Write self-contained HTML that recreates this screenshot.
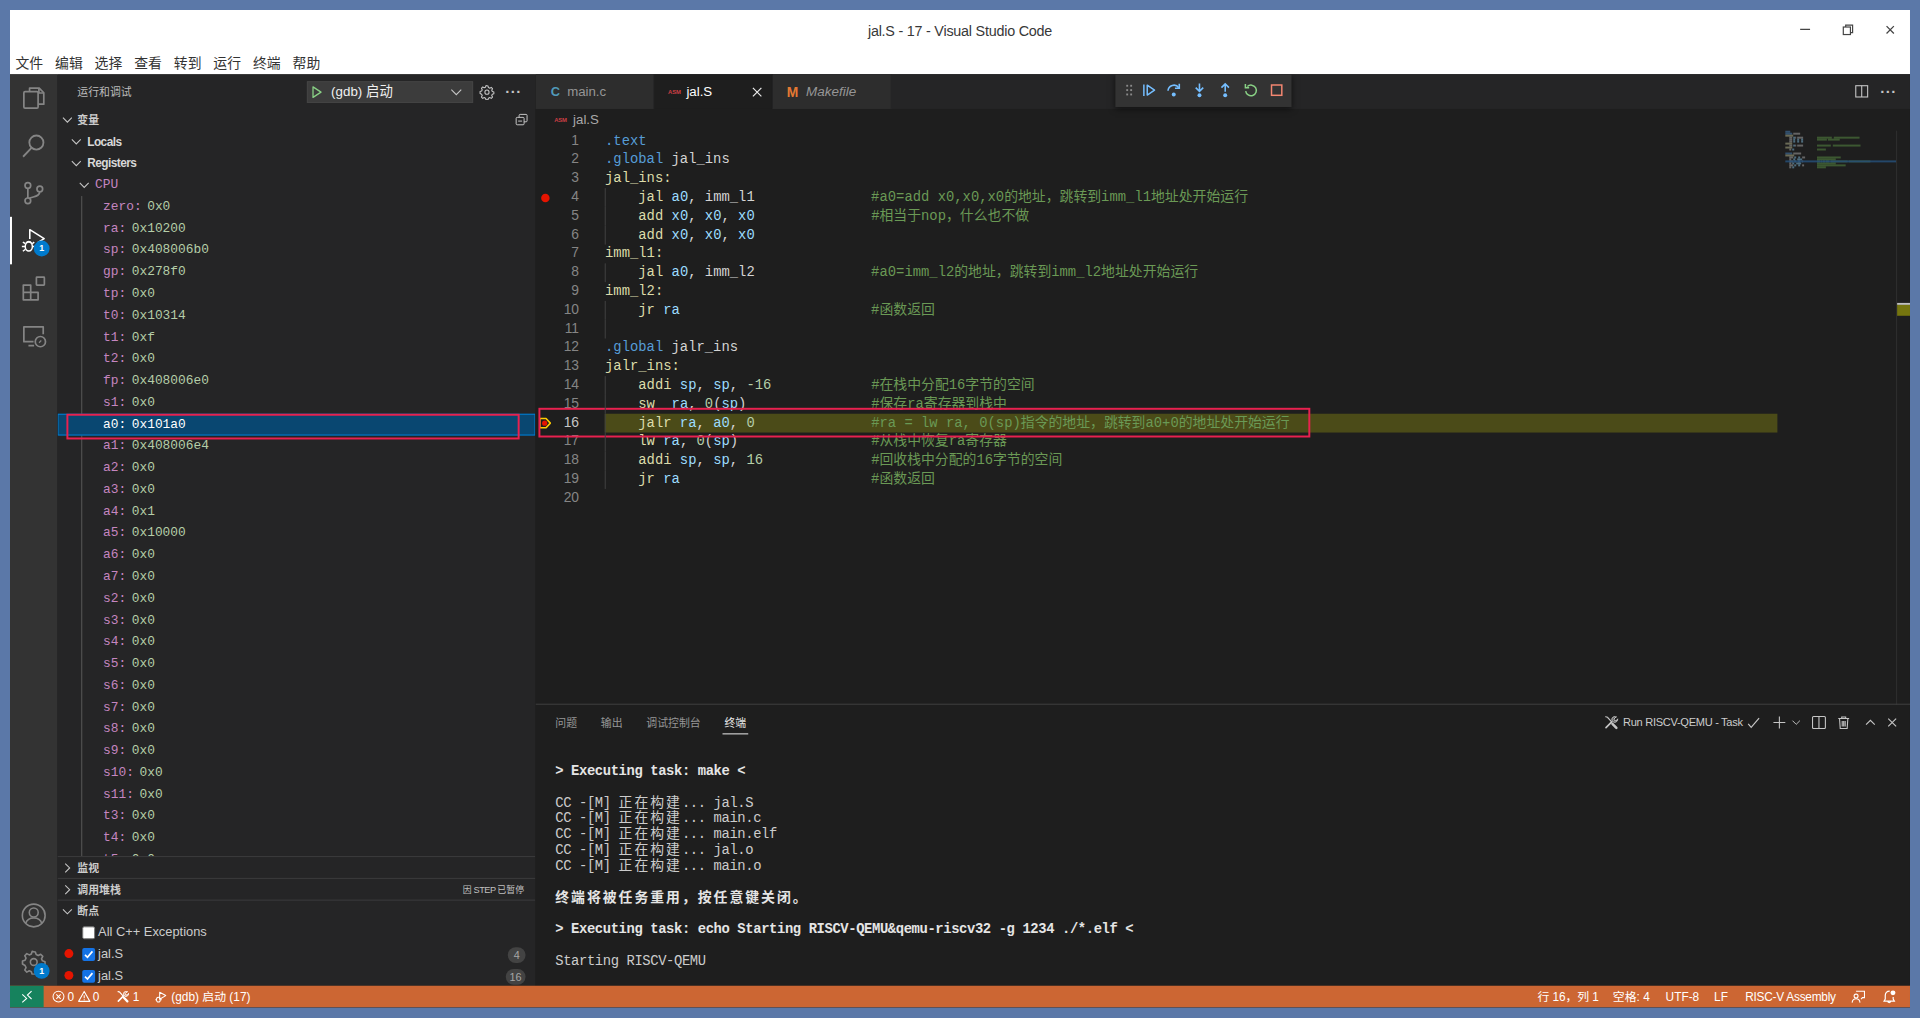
<!DOCTYPE html>
<html lang="zh-CN">
<head>
<meta charset="utf-8">
<title>jal.S - 17 - Visual Studio Code</title>
<style>
*{box-sizing:border-box;margin:0;padding:0}
html,body{width:1920px;height:1018px;overflow:hidden;background:#5b78a8}
body{position:relative;font-family:"Liberation Sans","Noto Sans CJK SC",sans-serif;font-size:13px;color:#ccc}
#win{position:absolute;left:10px;top:10px;width:1920px;height:1008.2px;transform:scale(0.989583);transform-origin:0 0;background:#1e1e1e;overflow:hidden}
.abs{position:absolute}
svg{display:block}
/* ---------- title + menu ---------- */
#title{left:0;top:0;width:1920px;height:64.7px;background:#fff;color:#333}
#title .cap{position:absolute;left:0;right:0;top:10.7px;text-align:center;font-size:14.5px;line-height:20px;color:#383838;letter-spacing:-0.23px}
#menu{position:absolute;left:5.5px;top:42.7px;height:22px;display:flex;font-size:14px;line-height:22px;color:#333}
#menu span{display:block;width:40px;text-align:left}
.wc{position:absolute;top:0;color:#444}
/* ---------- body ---------- */
#main{left:0;top:64.7px;width:1920px;height:921px}
#act{left:0;top:0;width:48px;height:921px;background:#333}
#side{left:48px;top:0;width:483px;height:921px;background:#252526;overflow:hidden}
#ed{left:531px;top:0;width:1389px;height:921px;background:#1e1e1e;overflow:hidden}
#status{left:0;top:985.9px;width:1920px;height:22.3px;background:#cc6633;color:#fff;font-size:12px;line-height:22px}

/* ---------- sidebar ---------- */
.mono{font-family:"Liberation Mono","Noto Sans CJK SC",monospace}
.shead{position:absolute;left:0;top:0;width:483px;height:35px}
.stitle{position:absolute;left:20px;top:1px;line-height:35px;font-size:11px;color:#bbb}
.dd{position:absolute;left:251.5px;top:7px;width:168px;height:22.5px;background:#3c3c3c;border:1px solid #444}
.ddt{position:absolute;left:25px;top:0;line-height:22px;font-size:13.500px;color:#f0f0f0}
.vars{left:0;top:35px;width:483px;height:755.8px;overflow:hidden}
.row{position:relative;height:22px;line-height:22px;white-space:nowrap;display:flex;align-items:center}
.chev{flex:none;margin-left:2px;margin-right:2px}
.phead{font-size:11px;font-weight:bold;color:#ccc}
.scope{font-size:12px;font-weight:bold;color:#d8d8d8;letter-spacing:-0.55px}
.cpu,.var{font-family:"Liberation Mono","Noto Sans CJK SC",monospace;font-size:13px}
.var{padding-left:46px;display:block}
.vn{color:#c586c0}.vv{color:#b5cea8}.var .vv{margin-left:5.600px}
.sel{background:#094771;outline:1px solid #007fd4;outline-offset:-1px}
.sel .vn,.sel .vv{color:#fff}
.guide{position:absolute;left:24px;top:88px;width:1px;height:700px;background:#585858}
.bott{left:0;top:790.8px;width:483px;height:132px}
.bt{border-top:1px solid #3c3c3d}
.paused{position:absolute;right:11.5px;top:-0.5px;font-size:9px;font-weight:normal;color:#c0c0c0;letter-spacing:0;word-spacing:-0.8px}
.bp{font-size:13px;color:#ccc}
.cb{position:absolute;left:25px;top:4.500px;width:13px;height:13px;background:#fff;border-radius:2px;border:1px solid #767676}
.cb.on{background:#1473e6;border:none}
.bl{position:absolute;left:41px;top:0}
.dot{position:absolute;left:7px;top:5.6px;width:9px;height:9px;border-radius:50%;background:#e51400}
.badge{position:absolute;right:10px;top:3.7px;min-width:18px;height:16px;line-height:16px;border-radius:8px;background:#434343;color:#a6a6a6;font-size:11px;text-align:center;padding:0 4px}
.redbox{border:2px solid #e8214f}

/* ---------- editor ---------- */
.tabs{position:absolute;left:0;top:0;width:1389px;height:35px;background:#252526;display:flex}
.tab{position:relative;width:120px;height:35px;background:#2d2d2d;border-right:1px solid #252526;color:#969696;font-size:13.4px;line-height:36.4px}
.tab.act{background:#1e1e1e;color:#fff}
.tab .ic{position:absolute;top:0}
.tab .tl{position:absolute;top:0}
.asm{position:absolute;font-size:6px;font-weight:bold;color:#cc3e44;letter-spacing:-0.200px;font-family:"Liberation Sans",sans-serif}
.dbgbar{position:absolute;left:585.5px;top:0;width:178.5px;height:33px;background:#333;box-shadow:0 2px 6px rgba(0,0,0,.55)}
.edact{position:absolute;right:0;top:0;width:70px;height:35px}
.crumb{position:absolute;left:1px;top:35.7px;width:1388px;height:22px;line-height:22px;font-size:13.4px;color:#a9a9a9}
.code{position:absolute;left:0;top:58.3px;width:1255px;height:400px;font-family:"Liberation Mono","Noto Sans CJK SC",monospace;font-size:14px;line-height:19px;color:#d4d4d4}
.ln{position:relative;height:19px;white-space:pre}
.no{position:absolute;left:0;top:-0.9px;width:43.7px;text-align:right;color:#858585;font-family:"Liberation Sans","Noto Sans CJK SC",sans-serif;font-size:14px;letter-spacing:-0.200px}
.cur .no{color:#c6c6c6}
.cd{position:absolute;left:70.300px;top:0;right:0;height:19px}
.cur .cd{background:#4b4b18}
.ig{position:absolute;left:70.300px;top:0;width:1px;height:19px;background:#404040;z-index:2}
.kd{color:#569cd6}.lb{color:#dcdcaa}.rg{color:#9cdcfe}.nm{color:#b5cea8}.cm{color:#6a9955}
.minimap{position:absolute;left:1263px;top:57.8px;width:112px;height:580px}
.minimap i{position:absolute;height:1.6px;opacity:.62}
.minimap .mmsel{left:0;top:30px;width:112px;height:2px;background:rgba(38,79,120,.85);opacity:1}
.vscroll{position:absolute;left:1375px;top:57px;width:14px;height:580px;border-left:1px solid #303030}
.vscroll .m1{position:absolute;left:0;top:174.500px;width:13px;height:1.500px;background:#c0c0c0}
.vscroll .m2{position:absolute;left:0;top:176px;width:13px;height:11.500px;background:#75750f}
.panel{position:absolute;left:0;top:636.500px;width:1389px;height:285.300px;border-top:1px solid #414141}

/* ---------- panel / status ---------- */
.ptabs{position:absolute;left:0;top:0;height:35px;width:400px;font-size:11px;line-height:38.6px;color:#969696}
.ptabs span{position:absolute;top:0;white-space:nowrap}
.ptabs .on{color:#e7e7e7}
.ptabs .on:after{content:"";position:absolute;left:-2px;right:-2px;top:29px;height:1px;background:#efefef}
.term{position:absolute;left:20px;top:58.500px;width:1340px;font-family:"Liberation Mono","Noto Sans CJK SC",monospace;font-size:14px;line-height:16px;color:#ccc;letter-spacing:-0.400px}
.term div{height:16px;white-space:pre}
.term b{color:#e5e5e5}
.term .cj{letter-spacing:2px}
.sl{position:absolute;top:0;height:22px;display:flex;align-items:center;white-space:nowrap}
.sr{position:absolute;top:0;height:22px;white-space:nowrap}
.scope .chev,.cpu .chev{margin-right:3px}
</style>
</head>
<body>
<div id="win">
  <div id="title" class="abs">
    <div class="cap">jal.S - 17 - Visual Studio Code</div>
    
    <svg class="wc" style="left:1806px;top:12px" width="16" height="16" viewBox="0 0 16 16"><path d="M3 7.500h10" stroke="#444" stroke-width="1.200"/></svg>
    <svg class="wc" style="left:1849px;top:12px" width="16" height="16" viewBox="0 0 16 16"><g fill="none" stroke="#444" stroke-width="1.200"><rect x="3.6" y="5.2" width="7.2" height="7.6"/><path d="M6 5.200V3.200h7v7.600h-2.200"/></g></svg>
    <svg class="wc" style="left:1892px;top:12px" width="16" height="16" viewBox="0 0 16 16"><path d="M4.300 4.300l7.400 7.400M11.700 4.300l-7.400 7.400" stroke="#444" stroke-width="1.3"/></svg>
    <div id="menu"><span>文件</span><span>编辑</span><span>选择</span><span>查看</span><span>转到</span><span>运行</span><span>终端</span><span>帮助</span></div>
  </div>
  <div id="main" class="abs">
    <div id="act" class="abs">
      <svg class="abs" style="left:10.2px;top:10.2px" width="27.6" height="27.6" viewBox="0 0 24 24"><g fill="none" stroke="#858585" stroke-width="1.500" stroke-linejoin="round"><path d="M8.500 6.500V3.500h8.500l4 4v10h-5"/><path d="M16.700 3.700v4h4"/><rect x="3.500" y="6.500" width="12.500" height="14.500" rx="1"/></g></svg>
      <svg class="abs" style="left:10.2px;top:58.2px" width="27.6" height="27.6" viewBox="0 0 24 24"><g fill="none" stroke="#858585" stroke-width="1.600"><circle cx="14.500" cy="9.500" r="6.200"/><path d="M10.200 14.200L2.800 22"/></g></svg>
      <svg class="abs" style="left:10.2px;top:106.2px" width="27.6" height="27.6" viewBox="0 0 24 24"><g fill="none" stroke="#858585" stroke-width="1.500"><circle cx="7" cy="5.500" r="2.500"/><circle cx="7" cy="19" r="2.500"/><circle cx="17.500" cy="8.500" r="2.500"/><path d="M7 8v8.500M17.500 11c0 4-5 4-9.500 6"/></g></svg>
      <div class="abs" style="left:0;top:144px;width:2px;height:48px;background:#fff"></div>
      <svg class="abs" style="left:10px;top:154px" width="30" height="30" viewBox="0 0 30 30"><g fill="none" stroke="#fff" stroke-width="1.600" stroke-linejoin="round"><path d="M10 12.500V3l14.500 9-6.500 4"/></g><g fill="none" stroke="#fff" stroke-width="1.500"><ellipse cx="9" cy="20" rx="3.600" ry="4.600"/><path d="M6.500 16.500c.8-2.200 4.200-2.200 5 0M5.400 20H2M5.600 17.200L3 15.500M5.600 22.800L3 24.800M12.600 20H15M12.400 17.200L14.500 15.500"/></g></svg>
      <div class="abs" style="left:24px;top:168.5px;width:16px;height:16px;border-radius:8px;background:#007acc;color:#fff;font-size:9px;font-weight:bold;line-height:16px;text-align:center">1</div>
      <svg class="abs" style="left:10.2px;top:202.2px" width="27.6" height="27.6" viewBox="0 0 24 24"><g fill="none" stroke="#858585" stroke-width="1.500" stroke-linejoin="round"><path d="M3 9.500h6.500v6.500H16v6.500H3zM9.500 16v6.500M3 16h6.500"/><rect x="14.500" y="2.500" width="7" height="7" rx=".5"/></g></svg>
      <svg class="abs" style="left:10.2px;top:250.2px" width="27.6" height="27.6" viewBox="0 0 24 24"><g fill="none" stroke="#858585" stroke-width="1.500" stroke-linejoin="round"><path d="M12 17.500H3.500V4.500h17V11M7.500 21h5"/><circle cx="18" cy="17.500" r="4.500"/><path d="M16.800 18.500l2-2" stroke-width="1"/></g></svg>
      <svg class="abs" style="left:10px;top:836px" width="28" height="28" viewBox="0 0 28 28"><g fill="none" stroke="#858585" stroke-width="1.600"><circle cx="14" cy="14" r="11.500"/><circle cx="14" cy="11" r="4.500"/><path d="M5.800 22c1.500-4.500 5-5.500 8.200-5.500s6.700 1 8.200 5.500"/></g></svg>
      <svg class="abs" style="left:11px;top:884px" width="26" height="26" viewBox="0 0 16 16"><g fill="none" stroke="#858585" stroke-width="1"><circle cx="8" cy="8" r="2.100"/><path d="M8 1.600l1 .2.500 1.600 1.300.6 1.500-.8 1.300 1.300-.8 1.500.6 1.300 1.600.5v1.900l-1.600.5-.6 1.300.8 1.500-1.300 1.300-1.500-.8-1.300.6-.5 1.600H7l-.5-1.600-1.300-.6-1.500.8-1.300-1.300.8-1.500-.6-1.300L1 9.300V7.400l1.600-.5.6-1.300-.8-1.500 1.300-1.300 1.500.8 1.300-.6.500-1.600z" stroke-linejoin="round"/></g></svg>
      <div class="abs" style="left:24px;top:898px;width:16px;height:16px;border-radius:8px;background:#007acc;color:#fff;font-size:9px;font-weight:bold;line-height:16px;text-align:center">1</div>
</div>
    <div id="side" class="abs">
    <div class="shead">
      <span class="stitle">运行和调试</span>
      <div class="dd"><svg width="16" height="16" viewBox="0 0 16 16" style="position:absolute;left:1.500px;top:2.500px"><path d="M4.2 2.7v10.6L12.3 8z" fill="none" stroke="#89d185" stroke-width="1.3" stroke-linejoin="round"/></svg><span class="ddt" style="top:-1px;left:24px">(gdb) 启动</span><svg width="16" height="16" viewBox="0 0 16 16" style="position:absolute;right:7.500px;top:2.500px"><path d="M3 5.5 8 10.5l5-5" fill="none" stroke="#c5c5c5" stroke-width="1.1"/></svg></div>
      <svg class="abs" style="left:426px;top:10px" width="16" height="16" viewBox="0 0 16 16"><g fill="none" stroke="#c5c5c5" stroke-width="1.1"><circle cx="8" cy="8" r="2.1"/><path d="M8 1.6l1 .2.5 1.6 1.3.6 1.5-.8 1.3 1.3-.8 1.5.6 1.3 1.6.5v1.9l-1.6.5-.6 1.3.8 1.5-1.3 1.3-1.5-.8-1.3.6-.5 1.6H7l-.5-1.6-1.3-.6-1.5.8-1.3-1.3.8-1.5-.6-1.3L1 9.3V7.4l1.600-.5.6-1.300-.8-1.500 1.300-1.300 1.500.8 1.300-.6.5-1.600z" stroke-linejoin="round"/></g></svg>
      <div class="abs" style="left:452.500px;top:7.200px;font-size:15px;color:#c5c5c5;letter-spacing:0.5px;line-height:22px;font-weight:bold">···</div>
    </div>
    <div class="abs vars">
      <div class="row phead"><svg class="chev" width="16" height="16" viewBox="0 0 16 16"><path d="M3.5 5.8 8 10.3l4.5-4.5" fill="none" stroke="#c5c5c5" stroke-width="1.1"/></svg><span>变量</span><svg class="abs" style="right:6px;top:3px" width="16" height="16" viewBox="0 0 16 16"><g fill="none" stroke="#c5c5c5" stroke-width="1"><rect x="2.5" y="5.5" width="8" height="7.5" rx="1"/><path d="M5.5 5.500V3.500a1 1 0 0 1 1-1h6a1 1 0 0 1 1 1v5.500a1 1 0 0 1-1 1h-2"/><path d="M4.500 9.250h4"/></g></svg></div>
      <div class="row scope" style="padding-left:9px"><svg class="chev" width="16" height="16" viewBox="0 0 16 16"><path d="M3.5 5.8 8 10.3l4.5-4.5" fill="none" stroke="#c5c5c5" stroke-width="1.1"/></svg><span>Locals</span></div>
      <div class="row scope" style="padding-left:9px"><svg class="chev" width="16" height="16" viewBox="0 0 16 16"><path d="M3.5 5.8 8 10.3l4.5-4.5" fill="none" stroke="#c5c5c5" stroke-width="1.1"/></svg><span>Registers</span></div>
      <div class="row cpu" style="padding-left:17px"><svg class="chev" width="16" height="16" viewBox="0 0 16 16"><path d="M3.5 5.8 8 10.3l4.5-4.5" fill="none" stroke="#c5c5c5" stroke-width="1.1"/></svg><span class="vn">CPU</span></div>
      <div class="guide"></div>
      <div class="row var"><span class="vn">zero:</span><span class="vv">0x0</span></div>
      <div class="row var"><span class="vn">ra:</span><span class="vv">0x10200</span></div>
      <div class="row var"><span class="vn">sp:</span><span class="vv">0x408006b0</span></div>
      <div class="row var"><span class="vn">gp:</span><span class="vv">0x278f0</span></div>
      <div class="row var"><span class="vn">tp:</span><span class="vv">0x0</span></div>
      <div class="row var"><span class="vn">t0:</span><span class="vv">0x10314</span></div>
      <div class="row var"><span class="vn">t1:</span><span class="vv">0xf</span></div>
      <div class="row var"><span class="vn">t2:</span><span class="vv">0x0</span></div>
      <div class="row var"><span class="vn">fp:</span><span class="vv">0x408006e0</span></div>
      <div class="row var"><span class="vn">s1:</span><span class="vv">0x0</span></div>
      <div class="row var sel"><span class="vn">a0:</span><span class="vv">0x101a0</span></div>
      <div class="row var"><span class="vn">a1:</span><span class="vv">0x408006e4</span></div>
      <div class="row var"><span class="vn">a2:</span><span class="vv">0x0</span></div>
      <div class="row var"><span class="vn">a3:</span><span class="vv">0x0</span></div>
      <div class="row var"><span class="vn">a4:</span><span class="vv">0x1</span></div>
      <div class="row var"><span class="vn">a5:</span><span class="vv">0x10000</span></div>
      <div class="row var"><span class="vn">a6:</span><span class="vv">0x0</span></div>
      <div class="row var"><span class="vn">a7:</span><span class="vv">0x0</span></div>
      <div class="row var"><span class="vn">s2:</span><span class="vv">0x0</span></div>
      <div class="row var"><span class="vn">s3:</span><span class="vv">0x0</span></div>
      <div class="row var"><span class="vn">s4:</span><span class="vv">0x0</span></div>
      <div class="row var"><span class="vn">s5:</span><span class="vv">0x0</span></div>
      <div class="row var"><span class="vn">s6:</span><span class="vv">0x0</span></div>
      <div class="row var"><span class="vn">s7:</span><span class="vv">0x0</span></div>
      <div class="row var"><span class="vn">s8:</span><span class="vv">0x0</span></div>
      <div class="row var"><span class="vn">s9:</span><span class="vv">0x0</span></div>
      <div class="row var"><span class="vn">s10:</span><span class="vv">0x0</span></div>
      <div class="row var"><span class="vn">s11:</span><span class="vv">0x0</span></div>
      <div class="row var"><span class="vn">t3:</span><span class="vv">0x0</span></div>
      <div class="row var"><span class="vn">t4:</span><span class="vv">0x0</span></div>
      <div class="row var"><span class="vn">t5:</span><span class="vv">0x0</span></div>
      <div class="row var"><span class="vn">t6:</span><span class="vv">0x0</span></div>
    </div>
    <div class="abs bott">
      <div class="row phead bt"><svg class="chev" width="16" height="16" viewBox="0 0 16 16"><path d="M5.8 3.5 10.3 8l-4.5 4.5" fill="none" stroke="#c5c5c5" stroke-width="1.1"/></svg><span>监视</span></div>
      <div class="row phead bt"><svg class="chev" width="16" height="16" viewBox="0 0 16 16"><path d="M5.8 3.5 10.3 8l-4.5 4.5" fill="none" stroke="#c5c5c5" stroke-width="1.1"/></svg><span>调用堆栈</span><span class="paused">因 <span style="letter-spacing:-0.45px;font-size:9.3px">STEP</span> 已暂停</span></div>
      <div class="row phead bt"><svg class="chev" width="16" height="16" viewBox="0 0 16 16"><path d="M3.5 5.8 8 10.3l4.5-4.5" fill="none" stroke="#c5c5c5" stroke-width="1.1"/></svg><span>断点</span></div>
      <div class="row bp"><span class="cb"></span><span class="bl">All C++ Exceptions</span></div>
      <div class="row bp"><span class="dot"></span><span class="cb on"><svg width="13" height="13" viewBox="0 0 13 13"><path d="M2.800 6.800l2.500 2.500 5-6" fill="none" stroke="#fff" stroke-width="1.700"/></svg></span><span class="bl">jal.S</span><span class="badge">4</span></div>
      <div class="row bp"><span class="dot"></span><span class="cb on"><svg width="13" height="13" viewBox="0 0 13 13"><path d="M2.800 6.800l2.500 2.500 5-6" fill="none" stroke="#fff" stroke-width="1.700"/></svg></span><span class="bl">jal.S</span><span class="badge">16</span></div>
    </div>
    <div class="abs redbox" style="left:8.5px;top:343px;width:458px;height:26px"></div>
</div>
    <div id="ed" class="abs">
    <div class="tabs">
      <div class="tab"><span class="ic" style="color:#519aba;font-weight:bold;font-size:13px;left:15.5px">C</span><span class="tl" style="left:32px">main.c</span></div>
      <div class="tab act"><span class="ic asm" style="left:14px">ASM</span><span class="tl" style="left:32.5px">jal.S</span><svg class="abs" style="left:96px;top:10px" width="16" height="16" viewBox="0 0 16 16"><path d="M3.700 3.700l8.600 8.600M12.300 3.700l-8.600 8.600" stroke="#e8e8e8" stroke-width="1.200" fill="none"/></svg></div>
      <div class="tab"><span class="ic" style="color:#e37933;font-weight:bold;font-size:14px;left:14px">M</span><span class="tl" style="left:33.5px;font-style:italic;font-size:13.6px">Makefile</span></div>
    </div>
    <div class="dbgbar">
      <svg class="abs" style="left:10px;top:9.2px" width="8" height="14" viewBox="0 0 8 14"><g fill="#8a8a8a"><rect x="1" y="1.6" width="1.9" height="1.9"/><rect x="5" y="1.6" width="1.9" height="1.9"/><rect x="1" y="6" width="1.9" height="1.9"/><rect x="5" y="6" width="1.9" height="1.9"/><rect x="1" y="10.4" width="1.9" height="1.9"/><rect x="5" y="10.4" width="1.9" height="1.9"/></g></svg>
      <svg class="abs" style="left:26px;top:8.3px" width="16" height="16" viewBox="0 0 16 16"><g fill="none" stroke="#75beff" stroke-width="1.5" stroke-linejoin="round"><path d="M2.8 2.2v11.6"/><path d="M6.2 3v10L13.6 8z"/></g></svg>
      <svg class="abs" style="left:51px;top:8.3px" width="16" height="16" viewBox="0 0 16 16"><g fill="none" stroke="#75beff" stroke-width="1.6"><path d="M2.2 8.6A5.9 5.9 0 0 1 13 5.6"/><path d="M13.6 1.6v4.4H9.2"/></g><circle cx="8" cy="12.3" r="2" fill="#75beff"/></svg>
      <svg class="abs" style="left:77px;top:8.3px" width="16" height="16" viewBox="0 0 16 16"><g fill="none" stroke="#75beff" stroke-width="1.6"><path d="M8 1.2v7.6M4.2 5.4L8 9.2l3.800-3.800"/></g><circle cx="8" cy="13.2" r="2" fill="#75beff"/></svg>
      <svg class="abs" style="left:103px;top:8.3px" width="16" height="16" viewBox="0 0 16 16"><g fill="none" stroke="#75beff" stroke-width="1.6"><path d="M8 9.600V1.800M4.200 5.400L8 1.600l3.800 3.800"/></g><circle cx="8" cy="13.200" r="2" fill="#75beff"/></svg>
      <svg class="abs" style="left:129px;top:8.3px" width="16" height="16" viewBox="0 0 16 16"><g fill="none" stroke="#89d185" stroke-width="1.5"><path d="M4.400 4.300A5.400 5.400 0 1 1 2.700 9"/><path d="M2.400 1.700v3.800h3.800"/></g></svg>
      <svg class="abs" style="left:155px;top:8.3px" width="16" height="16" viewBox="0 0 16 16"><rect x="2.800" y="2.800" width="10.400" height="10.400" fill="none" stroke="#f48771" stroke-width="1.500"/></svg>
</div>
    <div class="edact">
      <svg class="abs" style="left:13px;top:9.500px" width="16" height="16" viewBox="0 0 16 16"><g fill="none" stroke="#c5c5c5" stroke-width="1.1"><rect x="2.2" y="2.5" width="12" height="11.4"/><path d="M8.200 2.500v11.400"/></g></svg>
      <div class="abs" style="left:40px;top:7.6px;font-size:15px;color:#c5c5c5;letter-spacing:0.500px;line-height:22px;font-weight:bold">···</div>
</div>
    <div class="crumb"><span class="ic asm" style="left:18px;top:0;line-height:22px">ASM</span><span style="position:absolute;left:37px;top:0">jal.S</span></div>
    <div class="code">
      <div class="ln"><span class="no">1</span><span class="cd"><span class="kd">.text</span></span></div>
      <div class="ln"><span class="no">2</span><span class="cd"><span class="kd">.global</span> jal_ins</span></div>
      <div class="ln"><span class="no">3</span><span class="cd"><span class="lb">jal_ins:</span></span></div>
      <div class="ln"><span class="no">4</span><i class="ig"></i><span class="cd">    <span class="lb">jal</span> <span class="rg">a0</span>, imm_l1              <span class="cm">#a0=add x0,x0,x0的地址，跳转到imm_l1地址处开始运行</span></span></div>
      <div class="ln"><span class="no">5</span><i class="ig"></i><span class="cd">    <span class="lb">add</span> <span class="rg">x0</span>, <span class="rg">x0</span>, <span class="rg">x0</span>              <span class="cm">#相当于nop，什么也不做</span></span></div>
      <div class="ln"><span class="no">6</span><i class="ig"></i><span class="cd">    <span class="lb">add</span> <span class="rg">x0</span>, <span class="rg">x0</span>, <span class="rg">x0</span></span></div>
      <div class="ln"><span class="no">7</span><span class="cd"><span class="lb">imm_l1:</span></span></div>
      <div class="ln"><span class="no">8</span><i class="ig"></i><span class="cd">    <span class="lb">jal</span> <span class="rg">a0</span>, imm_l2              <span class="cm">#a0=imm_l2的地址，跳转到imm_l2地址处开始运行</span></span></div>
      <div class="ln"><span class="no">9</span><span class="cd"><span class="lb">imm_l2:</span></span></div>
      <div class="ln"><span class="no">10</span><i class="ig"></i><span class="cd">    <span class="lb">jr</span> <span class="rg">ra</span>                       <span class="cm">#函数返回</span></span></div>
      <div class="ln"><span class="no">11</span><i class="ig"></i><span class="cd"></span></div>
      <div class="ln"><span class="no">12</span><span class="cd"><span class="kd">.global</span> jalr_ins</span></div>
      <div class="ln"><span class="no">13</span><span class="cd"><span class="lb">jalr_ins:</span></span></div>
      <div class="ln"><span class="no">14</span><i class="ig"></i><span class="cd">    <span class="lb">addi</span> <span class="rg">sp</span>, <span class="rg">sp</span>, <span class="nm">-16</span>            <span class="cm">#在栈中分配16字节的空间</span></span></div>
      <div class="ln"><span class="no">15</span><i class="ig"></i><span class="cd">    <span class="lb">sw</span>  <span class="rg">ra</span>, <span class="nm">0</span>(<span class="rg">sp</span>)               <span class="cm">#保存ra寄存器到栈中</span></span></div>
      <div class="ln cur"><span class="no">16</span><i class="ig"></i><span class="cd">    <span class="lb">jalr</span> <span class="rg">ra</span>, <span class="rg">a0</span>, <span class="nm">0</span>              <span class="cm">#ra = lw ra, 0(sp)指令的地址，跳转到a0+0的地址处开始运行</span></span></div>
      <div class="ln"><span class="no">17</span><i class="ig"></i><span class="cd">    <span class="lb">lw</span> <span class="rg">ra</span>, <span class="nm">0</span>(<span class="rg">sp</span>)                <span class="cm">#从栈中恢复ra寄存器</span></span></div>
      <div class="ln"><span class="no">18</span><i class="ig"></i><span class="cd">    <span class="lb">addi</span> <span class="rg">sp</span>, <span class="rg">sp</span>, <span class="nm">16</span>             <span class="cm">#回收栈中分配的16字节的空间</span></span></div>
      <div class="ln"><span class="no">19</span><i class="ig"></i><span class="cd">    <span class="lb">jr</span> <span class="rg">ra</span>                       <span class="cm">#函数返回</span></span></div>
      <div class="ln"><span class="no">20</span><span class="cd"></span></div>
      <svg class="abs" style="left:4px;top:61px" width="12" height="12" viewBox="0 0 12 12"><circle cx="6" cy="6" r="4.300" fill="#e51400"/></svg>
      <svg class="abs" style="left:1.500px;top:285px" width="16" height="19" viewBox="0 0 16 19"><path d="M2.500 4.800h6.200l4.300 4.700-4.300 4.700H2.500z" fill="none" stroke="#ffcc00" stroke-width="1.600" stroke-linejoin="round"/><circle cx="7.300" cy="9.500" r="2.600" fill="#e51400"/></svg>
    </div>
    <div class="minimap"><i style="left:0.0px;top:0px;width:5.0px;background:#3f6f9e"></i><i style="left:0.0px;top:2px;width:7.1px;background:#3f6f9e"></i><i style="left:8.1px;top:2px;width:7.1px;background:#8f8f8f"></i><i style="left:0.0px;top:4px;width:8.1px;background:#9a9a78"></i><i style="left:4.0px;top:6px;width:3.0px;background:#8f8f8f"></i><i style="left:8.1px;top:6px;width:2.0px;background:#6c9cb8"></i><i style="left:10.1px;top:6px;width:1.0px;background:#8f8f8f"></i><i style="left:12.1px;top:6px;width:6.1px;background:#8f8f8f"></i><i style="left:32.3px;top:6px;width:15.2px;background:#4f7a3e"></i><i style="left:48.5px;top:6px;width:26.3px;background:#4f7a3e"></i><i style="left:4.0px;top:8px;width:3.0px;background:#8f8f8f"></i><i style="left:8.1px;top:8px;width:2.0px;background:#6c9cb8"></i><i style="left:12.1px;top:8px;width:2.0px;background:#6c9cb8"></i><i style="left:16.2px;top:8px;width:2.0px;background:#6c9cb8"></i><i style="left:32.3px;top:8px;width:10.1px;background:#4f7a3e"></i><i style="left:43.4px;top:8px;width:12.1px;background:#4f7a3e"></i><i style="left:4.0px;top:10px;width:3.0px;background:#8f8f8f"></i><i style="left:8.1px;top:10px;width:2.0px;background:#6c9cb8"></i><i style="left:12.1px;top:10px;width:2.0px;background:#6c9cb8"></i><i style="left:16.2px;top:10px;width:2.0px;background:#6c9cb8"></i><i style="left:0.0px;top:12px;width:7.1px;background:#9a9a78"></i><i style="left:4.0px;top:14px;width:3.0px;background:#8f8f8f"></i><i style="left:8.1px;top:14px;width:2.0px;background:#6c9cb8"></i><i style="left:10.1px;top:14px;width:1.0px;background:#8f8f8f"></i><i style="left:12.1px;top:14px;width:6.1px;background:#8f8f8f"></i><i style="left:32.3px;top:14px;width:14.1px;background:#4f7a3e"></i><i style="left:47.5px;top:14px;width:28.3px;background:#4f7a3e"></i><i style="left:0.0px;top:16px;width:7.1px;background:#9a9a78"></i><i style="left:4.0px;top:18px;width:2.0px;background:#8f8f8f"></i><i style="left:7.1px;top:18px;width:2.0px;background:#6c9cb8"></i><i style="left:32.3px;top:18px;width:9.1px;background:#4f7a3e"></i><i style="left:0.0px;top:22px;width:7.1px;background:#3f6f9e"></i><i style="left:8.1px;top:22px;width:8.1px;background:#8f8f8f"></i><i style="left:0.0px;top:24px;width:9.1px;background:#9a9a78"></i><i style="left:4.0px;top:26px;width:4.0px;background:#8f8f8f"></i><i style="left:9.1px;top:26px;width:2.0px;background:#6c9cb8"></i><i style="left:13.1px;top:26px;width:2.0px;background:#6c9cb8"></i><i style="left:17.2px;top:26px;width:3.0px;background:#8f8f8f"></i><i style="left:32.3px;top:26px;width:24.2px;background:#4f7a3e"></i><i style="left:4.0px;top:28px;width:2.0px;background:#8f8f8f"></i><i style="left:8.1px;top:28px;width:2.0px;background:#6c9cb8"></i><i style="left:12.1px;top:28px;width:5.0px;background:#6c9cb8"></i><i style="left:32.3px;top:28px;width:19.2px;background:#4f7a3e"></i><i style="left:4.0px;top:30px;width:4.0px;background:#8f8f8f"></i><i style="left:9.1px;top:30px;width:2.0px;background:#6c9cb8"></i><i style="left:13.1px;top:30px;width:2.0px;background:#6c9cb8"></i><i style="left:17.2px;top:30px;width:1.0px;background:#8f8f8f"></i><i style="left:32.3px;top:30px;width:3.0px;background:#4f7a3e"></i><i style="left:36.4px;top:30px;width:1.0px;background:#4f7a3e"></i><i style="left:38.4px;top:30px;width:2.0px;background:#4f7a3e"></i><i style="left:41.4px;top:30px;width:3.0px;background:#4f7a3e"></i><i style="left:45.5px;top:30px;width:17.2px;background:#4f7a3e"></i><i style="left:63.6px;top:30px;width:22.2px;background:#4f7a3e"></i><i style="left:4.0px;top:32px;width:2.0px;background:#8f8f8f"></i><i style="left:7.1px;top:32px;width:2.0px;background:#6c9cb8"></i><i style="left:11.1px;top:32px;width:5.0px;background:#6c9cb8"></i><i style="left:32.3px;top:32px;width:19.2px;background:#4f7a3e"></i><i style="left:4.0px;top:34px;width:4.0px;background:#8f8f8f"></i><i style="left:9.1px;top:34px;width:2.0px;background:#6c9cb8"></i><i style="left:13.1px;top:34px;width:2.0px;background:#6c9cb8"></i><i style="left:17.2px;top:34px;width:2.0px;background:#8f8f8f"></i><i style="left:32.3px;top:34px;width:28.3px;background:#4f7a3e"></i><i style="left:4.0px;top:36px;width:2.0px;background:#8f8f8f"></i><i style="left:7.1px;top:36px;width:2.0px;background:#6c9cb8"></i><i style="left:32.3px;top:36px;width:9.1px;background:#4f7a3e"></i><i class="mmsel"></i></div>
    <div class="vscroll"><i class="m1"></i><i class="m2"></i></div>
    <div class="abs redbox" style="left:2.5px;top:337.5px;width:780px;height:29.8px"></div>
    <div class="panel">
      <div class="ptabs"><span style="left:20px">问题</span><span style="left:66px">输出</span><span style="left:112px">调试控制台</span><span class="on" style="left:191px">终端</span></div>
      <svg class="abs" style="left:1079px;top:10px" width="16" height="16" viewBox="0 0 16 16"><g fill="none" stroke="#c5c5c5" stroke-linecap="round"><path d="M2.800 13.200l5.800-5.800" stroke-width="1.7"/><path d="M12.900 2.400l-2.100 2.100.7 1.500 1.600.400 1.500-2.100a3 3 0 0 1-4 3.300 3 3 0 0 1-1.400-4.400 3 3 0 0 1 3.700-.8z" stroke-width="1.0" stroke-linejoin="round" fill="#c5c5c5" fill-opacity=".35"/><path d="M2.500 2.200l1.800.5 4.200 4.600" stroke-width="1.2"/><path d="M9.300 9.300l4 4.200" stroke-width="2.5"/></g></svg>
      <div class="abs" style="left:1099px;top:8.5px;font-size:11.2px;color:#ccc;line-height:18px;letter-spacing:-0.3px">Run RISCV-QEMU - Task</div>
      <svg class="abs" style="left:1223px;top:10px" width="16" height="16" viewBox="0 0 16 16"><path d="M2.500 9.500l3 3.500 8-9.500" fill="none" stroke="#c5c5c5" stroke-width="1.200"/></svg>
      <svg class="abs" style="left:1249px;top:10px" width="16" height="16" viewBox="0 0 16 16"><path d="M8 2v12M2 8h12" fill="none" stroke="#c5c5c5" stroke-width="1.100"/></svg>
      <svg class="abs" style="left:1267.5px;top:12px" width="12" height="12" viewBox="0 0 16 16"><path d="M3 5.500l5 5 5-5" fill="none" stroke="#c5c5c5" stroke-width="1.300"/></svg>
      <svg class="abs" style="left:1289px;top:10px" width="16" height="16" viewBox="0 0 16 16"><g fill="none" stroke="#c5c5c5" stroke-width="1.100"><rect x="1.500" y="2" width="13" height="12" rx="1"/><path d="M8 2v12"/></g></svg>
      <svg class="abs" style="left:1314px;top:10px" width="16" height="16" viewBox="0 0 16 16"><g fill="none" stroke="#c5c5c5" stroke-width="1.100"><path d="M2.500 4h11M6 4V2.500h4V4M3.800 4l.7 10h7l.7-10M6.500 6.500v5.500M8 6.500v5.500M9.500 6.500v5.500"/></g></svg>
      <svg class="abs" style="left:1340.5px;top:10px" width="16" height="16" viewBox="0 0 16 16"><path d="M3.600 10.200l4.400-4.400 4.400 4.400" fill="none" stroke="#c5c5c5" stroke-width="1.150"/></svg>
      <svg class="abs" style="left:1362.5px;top:10px" width="16" height="16" viewBox="0 0 16 16"><path d="M4 4l8 8M12 4l-8 8" fill="none" stroke="#c5c5c5" stroke-width="1.150"/></svg>
      <div class="term"><div><b>&gt; Executing task: make &lt;</b></div>
<div> </div>
<div>CC -[M] <span class="cj">正在构建</span>... jal.S</div>
<div>CC -[M] <span class="cj">正在构建</span>... main.c</div>
<div>CC -[M] <span class="cj">正在构建</span>... main.elf</div>
<div>CC -[M] <span class="cj">正在构建</span>... jal.o</div>
<div>CC -[M] <span class="cj">正在构建</span>... main.o</div>
<div> </div>
<div><b class="cj">终端将被任务重用，按任意键关闭。</b></div>
<div> </div>
<div><b>&gt; Executing task: echo Starting RISCV-QEMU&amp;qemu-riscv32 -g 1234 ./*.elf &lt;</b></div>
<div> </div>
<div>Starting RISCV-QEMU</div></div>
</div>
</div>
  </div>
  <div id="status" class="abs">
    <div class="abs" style="left:0;top:0;width:34px;height:22px;background:#16825d"><svg style="position:absolute;left:9px;top:3px" width="16" height="16" viewBox="0 0 16 16"><path d="M3.4 5.800L7.800 9.800 3.400 13.800M12.800 2.400L8.600 6.400l4.200 4" fill="none" stroke="#fff" stroke-width="1.100"/></svg></div>
    <div class="sl" style="left:42px"><svg width="14" height="14" viewBox="0 0 16 16" style="margin-right:2px"><g fill="none" stroke="#fff" stroke-width="1.200"><circle cx="8" cy="8" r="6.300"/><path d="M5.500 5.500l5 5M10.500 5.500l-5 5"/></g></svg>0<svg width="14" height="14" viewBox="0 0 16 16" style="margin:0 2px 0 3px"><g fill="none" stroke="#fff" stroke-width="1.200" stroke-linejoin="round"><path d="M8 2L1.500 13.500h13z"/><path d="M8 6.500v3.500M8 11v1.200"/></g></svg>0</div>
    <div class="sl" style="left:107px"><svg width="14" height="14" viewBox="0 0 16 16" style="margin-right:3px"><g fill="none" stroke="#fff" stroke-linecap="round"><path d="M2.800 13.200l5.800-5.800" stroke-width="1.8"/><path d="M12.900 2.400l-2.100 2.100.7 1.500 1.600.400 1.500-2.100a3 3 0 0 1-4 3.300 3 3 0 0 1-1.400-4.400 3 3 0 0 1 3.700-.8z" stroke-width="1.1" stroke-linejoin="round" fill="#fff" fill-opacity=".35"/><path d="M2.500 2.200l1.800.5 4.200 4.600" stroke-width="1.3"/><path d="M9.300 9.300l4 4.200" stroke-width="2.6"/></g></svg>1</div>
    <div class="sl" style="left:146px"><svg width="14" height="14" viewBox="0 0 16 16" style="margin-right:3px"><g fill="none" stroke="#fff" stroke-width="1.200" stroke-linejoin="round"><path d="M6 3v8l7-4.200z"/><ellipse cx="4.500" cy="11.500" rx="2.200" ry="2.800"/><path d="M1 11.500h1.500M7 11.500h1.500"/></g></svg>(gdb) 启动 (17)</div>
    <div class="sr" style="right:314.5px;letter-spacing:-0.1px">行 16，列 1</div>
    <div class="sr" style="right:263px">空格: 4</div>
    <div class="sr" style="right:213px">UTF-8</div>
    <div class="sr" style="right:184px">LF</div>
    <div class="sr" style="right:75px;letter-spacing:-0.25px">RISC-V Assembly</div>
    <svg class="abs" style="left:1860px;top:3px" width="16" height="16" viewBox="0 0 16 16"><g fill="none" stroke="#fff" stroke-width="1.100"><path d="M5.500 2.500h8.500v6.500h-2l-1.500 1.500"/><circle cx="5.500" cy="7.500" r="2"/><path d="M1.500 14c.5-3 2-3.800 4-3.800s3.500.8 4 3.800"/></g></svg>
    <svg class="abs" style="left:1891px;top:3px" width="16" height="16" viewBox="0 0 16 16"><g fill="none" stroke="#fff" stroke-width="1.200"><path d="M8.500 2.500C5.500 2.500 4 4.500 4 7v3.500L2.800 12.500h10.400L12 10.500V8.500M6.500 12.500a1.500 1.500 0 0 0 3 0"/></g><circle cx="11.800" cy="4.200" r="2.500" fill="#fff"/></svg>
</div>
</div>
</body>
</html>
